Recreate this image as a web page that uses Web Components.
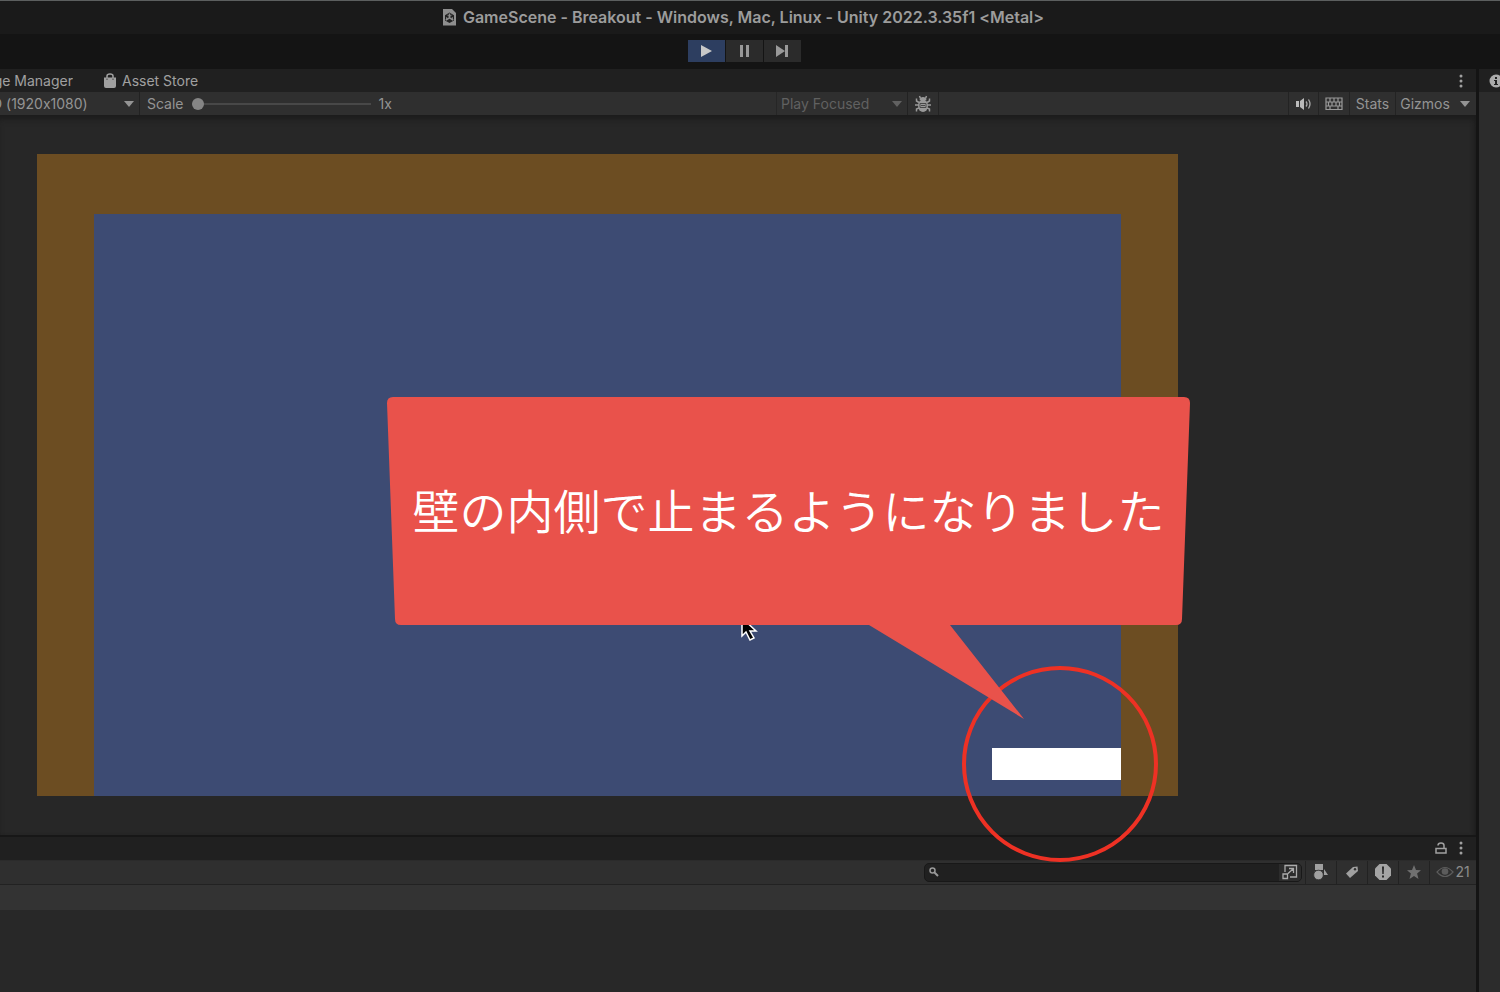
<!DOCTYPE html>
<html lang="ja">
<head>
<meta charset="utf-8">
<title>GameScene - Breakout</title>
<style>
  html, body { margin: 0; background: #141414; }
  body { font-family: Inter, "Noto Sans CJK JP", sans-serif; font-size: 14px; line-height: 20px; font-variant-ligatures: no-contextual; color: #9a9a9a; }
</style>
</head>
<body>
<unity-editor></unity-editor>
<script>
const base = `<style>
  *, *::before { box-sizing: border-box; }
  button, input, select { font: inherit; font-variant-ligatures: no-contextual; color: inherit; margin: 0; padding: 0; border: 0; background: none; appearance: none; outline: 0; }
  button { display: flex; align-items: center; justify-content: center; }
  svg { display: block; flex: none; }
</style>`;
function define(name, html) {
  customElements.define(name, class extends HTMLElement {
    constructor() {
      super();
      this.attachShadow({ mode: "open" }).innerHTML = base + html;
    }
  });
}

const icons = {
  scene: [14, 18, '<path d="M1 1h9l4 4v12.500H1z" fill="#8e8e8e"/><path d="M7.500 4.500l4.500 2.700v5.200l-4.500 2.700L3 12.400V7.200z" fill="#222"/><path d="M7.500 9.800V5.500M7.500 9.800l-3.700 2.200M7.500 9.800l3.700 2.200" stroke="#8e8e8e" stroke-width="1.500"/><path d="M5.500 7.200l2 1.200 2-1.200M4.700 9.200v2M10.300 9.200v2" stroke="#8e8e8e" fill="none"/>'],
  play: [14, 14, '<path d="M2 1l11 6-11 6z" fill="#c8c8c8"/>'],
  pause: [14, 14, '<path d="M3 1h3v12H3zM9 1h3v12H9z" fill="#999"/>'],
  step: [14, 14, '<path d="M1 1l9 6-9 6zM10 1h3v12h-3z" fill="#999"/>'],
  bag: [14, 16, '<path d="M1 4.500h12v8.500q0 2-2 2H3q-2 0-2-2z" fill="#a0a0a0"/><path d="M4 6V3Q4 1 7 1t3 2V6" fill="none" stroke="#a0a0a0" stroke-width="1.500"/><path d="M4 5.500v1.500M10 5.500v1.500" stroke="#444"/>'],
  down: [10, 6, '<path d="M0 0h10L5 6z" fill="currentColor"/>'],
  dots: [4, 14, '<g fill="#a0a0a0"><circle cx="2" cy="2" r="1.500"/><circle cx="2" cy="7" r="1.500"/><circle cx="2" cy="12" r="1.500"/></g>'],
  bug: [18, 18, '<g stroke="#999" stroke-width="1.500" fill="none"><path d="M6.500 3.500L5.500 1M11.500 3.500l1-2.500M5 7.500L2.500 6V3.500M13 7.500L15.500 6V3.500M4.500 10H1M13.500 10H17M5 13l-2.500 1V16.500M13 13l2.500 1V16.500"/></g><path d="M5.500 5.200Q6 2 9 2t3.500 3.200z" fill="#999"/><ellipse cx="9" cy="10.800" rx="5" ry="6.200" fill="#999"/><path d="M6 8.500h6v4H6zM7 10.500h4" stroke="#484848" fill="none"/>'],
  sound: [16, 14, '<path d="M0 4h3v6H0zM4 4l4-3v12l-4-3z" fill="#bbb"/><path d="M10 4.500q2 2.500 0 5M12.500 2.500q3 4.500 0 9" fill="none" stroke="#aaa" stroke-width="1.300"/>'],
  keys: [18, 14, '<path d="M1 1h16v11.500H1zM1 5h16M1 9h16M5 1v4M9 1v4M13 1v4M3.500 5v4M7 5v4M11 5v4M14.500 5v4M5 9v3.500M13 9v3.500" fill="none" stroke="#999" stroke-width="1.200"/>'],
  info: [14, 14, '<circle cx="7" cy="7" r="6.500" fill="#aaa"/><path d="M6 3h2v2H6zM5 6h3v4h1v1H5v-1h1V7H5z" fill="#202020"/>'],
  lock: [12, 14, '<path d="M1 7.500h10V12H1zM3 4.500q0-2.500 3-2.500t3 2.500v3" fill="none" stroke="#a0a0a0" stroke-width="1.500"/>'],
  search: [10, 10, '<circle cx="3.500" cy="3.500" r="2.500" fill="none" stroke="#999" stroke-width="1.500"/><path d="M5.500 5.500L9 9" stroke="#999" stroke-width="2"/>'],
  open: [16, 16, '<path d="M3 8V1.500h11.500V13H8M1 10h4.500v4.500H1zM6 9.500L11 5M7 4.500h4.500V9" fill="none" stroke="#aaa" stroke-width="1.300"/>'],
  shapes: [16, 16, '<path d="M2 0h8v6H2zM11 5l4 6h-4z" fill="#a0a0a0"/><circle cx="5.500" cy="11" r="4.800" fill="#a0a0a0" stroke="#303030" stroke-width=".8"/>'],
  tag: [14, 14, '<path d="M1 8.500L8 2l4.500-.5L13 6l-8 7z" fill="#a0a0a0"/><circle cx="10" cy="4.200" r="1.200" fill="#303030"/>'],
  alert: [18, 18, '<path d="M5.500 1h7L17 5.500v7L12.500 17h-7L1 12.500v-7z" fill="#a5a5a5"/><path d="M8 3.500h2L9.700 11H8.300zM8 12.500h2v2H8z" fill="#282828"/>'],
  star: [14, 14, '<path d="M7 0l2 4.900 5 .4-3.900 3.300L11.500 14 7 10.900 2.500 14l1.400-5.400L0 5.300l5-.4z" fill="#707070"/>'],
  eye: [18, 12, '<path d="M1 6q8-9 16 0-8 9-16 0z" fill="none" stroke="#5c5c5c" stroke-width="1.200"/><circle cx="9" cy="5.500" r="3.300" fill="#5c5c5c"/>']
};
customElements.define("ui-icon", class extends HTMLElement {
  connectedCallback() {
    if (this.shadowRoot) return;
    const [w, h, body] = icons[this.getAttribute("name")];
    this.attachShadow({ mode: "open" }).innerHTML =
      `<style>:host{display:block;flex:none}svg{display:block}</style><svg width="${w}" height="${h}" viewBox="0 0 ${w} ${h}" aria-hidden="true">${body}</svg>`;
  }
});

define("title-bar", `<style>
  :host { display: block; background: #1a1a1a; border-top: 1px solid #5c5f5f; }
  h1 { margin: 0; height: 33px; padding: 0 14px 2px 0; display: flex; align-items: center; justify-content: center; gap: 7px; font-size: 16px; line-height: 20px; font-weight: 600; color: #9c9c9c; }
</style><h1><ui-icon name="scene"></ui-icon><slot></slot></h1>`);

define("play-controls", `<style>
  :host { display: flex; justify-content: center; gap: 1px; height: 35px; padding: 6px 12px 7px 0; background: #141414; }
  button { width: 37px; background: #2b2b2b; }
  .on { background: #2d3e60; }
</style>
<button class="on" aria-label="Play"><ui-icon name="play"></ui-icon></button>
<button aria-label="Pause"><ui-icon name="pause"></ui-icon></button>
<button aria-label="Step"><ui-icon name="step"></ui-icon></button>`);

define("game-tabs", `<style>
  :host { display: flex; align-items: center; height: 23px; background: #202020; padding-right: 13px; color: #a0a0a0; }
  .cut { width: 73px; display: flex; justify-content: flex-end; overflow: hidden; white-space: nowrap; margin-right: 30px; }
  .tab { gap: 5px; }
  .end { margin-left: auto; }
</style>
<div class="cut"><button>ge Manager</button></div>
<button class="tab"><ui-icon name="bag"></ui-icon>Asset Store</button>
<button class="end" aria-label="Game menu"><ui-icon name="dots"></ui-icon></button>`);

define("game-toolbar", `<style>
  :host { display: flex; height: 24px; background: #2f2f2f; border-bottom: 1px solid #1c1c1c; color: #949494; }
  .pick { position: relative; display: flex; justify-content: flex-end; overflow: hidden; border-right: 1px solid #222; }
  .pick ui-icon { position: absolute; right: 5px; top: 9px; pointer-events: none; }
  .size { width: 140px; }
  .size select { flex: none; width: 147px; }
  .mode { width: 132px; border-left: 1px solid #262626; color: #616161; }
  .mode select { width: 100%; padding-left: 4px; }
  label { display: flex; align-items: center; padding-left: 7px; gap: 8px; }
  input { width: 179px; height: 14px; }
  input::-webkit-slider-runnable-track { height: 2px; background: #484848; }
  input::-webkit-slider-thumb { appearance: none; width: 12px; height: 12px; margin-top: -5px; border-radius: 50%; background: #858585; }
  .space { flex: 1; }
  .gap { flex: 0 1 349px; }
  button { border-right: 1px solid #232323; }
  .first { border-left: 1px solid #232323; }
  .tool { width: 31px; }
  .stats { width: 46px; }
  .giz { width: 58px; border: 0; }
  .arrow { width: 22px; border: 0; }
</style>
<div class="pick size"><select aria-label="Resolution"><option>D (1920x1080)</option></select><ui-icon name="down"></ui-icon></div>
<label>Scale <input type="range" min="1" max="5" value="1"><output>1x</output></label>
<div class="space"></div>
<div class="pick mode"><select aria-label="Play mode"><option>Play Focused</option></select><ui-icon name="down"></ui-icon></div>
<button class="tool" aria-label="Debug"><ui-icon name="bug"></ui-icon></button>
<div class="gap"></div>
<button class="tool first" aria-label="Mute"><ui-icon name="sound"></ui-icon></button>
<button class="tool" aria-label="Shortcuts"><ui-icon name="keys"></ui-icon></button>
<button class="stats">Stats</button>
<button class="giz">Gizmos</button>
<button class="arrow" aria-label="Gizmo options"><ui-icon name="down"></ui-icon></button>`);

define("call-out", `<style>
  :host { display: block; position: absolute; z-index: 2; left: 350px; top: 243px; width: 803px; }
  svg { position: absolute; left: 0; top: 0; }
  p { position: relative; margin: 0; height: 224px; display: flex; align-items: center; justify-content: center; color: #fff; font: 350 47px/68px "Noto Sans CJK JP DemiLight", "Noto Sans CJK JP", sans-serif; white-space: nowrap; }
</style>
<svg width="803" height="322" viewBox="0 0 803 322" fill="#e9524b" aria-hidden="true"><path d="M6 0H797Q803 0 803 6L795 222Q795 228 789 228H563L637 322 482 228H14Q8 228 8 222L0 6Q0 0 6 0z"/></svg>
<p><slot></slot></p>`);

define("game-view", `<style>
  :host { display: block; padding: 38px 298px 39px 37px; background: #272727; box-shadow: inset 0 6px 6px -3px #1c1c1c, inset -4px 0 5px -3px #1c1c1c; }
  .wall { position: relative; aspect-ratio: 16 / 9; padding: 60px 57px 0; background: #6c4d22; display: flex; }
  .field { flex: 1; background: #3d4b73; display: flex; align-items: flex-end; justify-content: flex-end; padding-bottom: 16px; }
  .paddle { width: 129px; height: 32px; background: #fff; }
  .ring { position: absolute; z-index: 1; right: 20px; bottom: -66px; width: 196px; height: 196px; border: 4px solid #ee3124; border-radius: 50%; }
  .cursor { position: absolute; left: 703px; top: 462px; }
</style>
<div class="wall">
  <div class="field"><div class="paddle"></div></div>
  <svg class="cursor" width="18" height="26" viewBox="0 0 18 26" aria-hidden="true"><path d="M2 2v18l4-4 4 8 4-2-4-7h6z" fill="#000" stroke="#fff" stroke-width="1.500"/></svg>
  <div class="ring"></div>
  <call-out>壁の内側で止まるようになりました</call-out>
</div>`);

define("project-panel", `<style>
  :host { display: flex; flex-direction: column; flex: 1; border-top: 2px solid #171717; background: #282828; }
  .tabs { height: 23px; display: flex; align-items: center; justify-content: flex-end; gap: 12px; padding-right: 13px; background: #202020; }
  .tools { height: 25px; display: flex; justify-content: flex-end; background: #2f2f2f; border-top: 1px solid #2b2b2b; border-bottom: 1px solid #222; color: #8c8c8c; }
  .search { width: 378px; margin: 2px 3px 2px 0; display: flex; align-items: center; background: #202020; border: 1px solid #181818; border-radius: 5px; overflow: hidden; padding-left: 4px; gap: 4px; }
  .search input { flex: 1; min-width: 0; height: 18px; }
  .search button { width: 22px; height: 20px; background: #2c2c2c; border: 0; }
  .tools > button { width: 31px; border-left: 1px solid #222; }
  .tools > .count { width: 47px; gap: 1px; }
  .path { height: 25px; background: #333; }
</style>
<div class="tabs"><button aria-label="Lock"><ui-icon name="lock"></ui-icon></button><button aria-label="Project menu"><ui-icon name="dots"></ui-icon></button></div>
<div class="tools">
  <div class="search"><ui-icon name="search"></ui-icon><input type="text" aria-label="Search"><button aria-label="Open search"><ui-icon name="open"></ui-icon></button></div>
  <button aria-label="Filter by type"><ui-icon name="shapes"></ui-icon></button>
  <button aria-label="Filter by label"><ui-icon name="tag"></ui-icon></button>
  <button aria-label="Filter by log"><ui-icon name="alert"></ui-icon></button>
  <button aria-label="Favorites"><ui-icon name="star"></ui-icon></button>
  <button class="count"><ui-icon name="eye"></ui-icon>21</button>
</div>
<div class="path"></div>`);

define("side-panel", `<style>
  :host { display: block; width: 21px; background: #2c2c2c; overflow: hidden; }
  .tab { height: 23px; padding-left: 10px; display: flex; align-items: center; background: #202020; }
</style><div class="tab"><ui-icon name="info"></ui-icon></div>`);

define("unity-editor", `<style>
  :host { display: flex; flex-direction: column; min-height: 100vh; overflow: hidden; }
  main { flex: 1; display: flex; gap: 3px; }
  .dock { flex: 1; min-width: 0; display: flex; flex-direction: column; }
</style>
<title-bar>GameScene - Breakout - Windows, Mac, Linux - Unity 2022.3.35f1 &lt;Metal&gt;</title-bar>
<play-controls></play-controls>
<main>
  <div class="dock"><game-tabs></game-tabs><game-toolbar></game-toolbar><game-view></game-view><project-panel></project-panel></div>
  <side-panel></side-panel>
</main>`);
</script>
</body>
</html>
